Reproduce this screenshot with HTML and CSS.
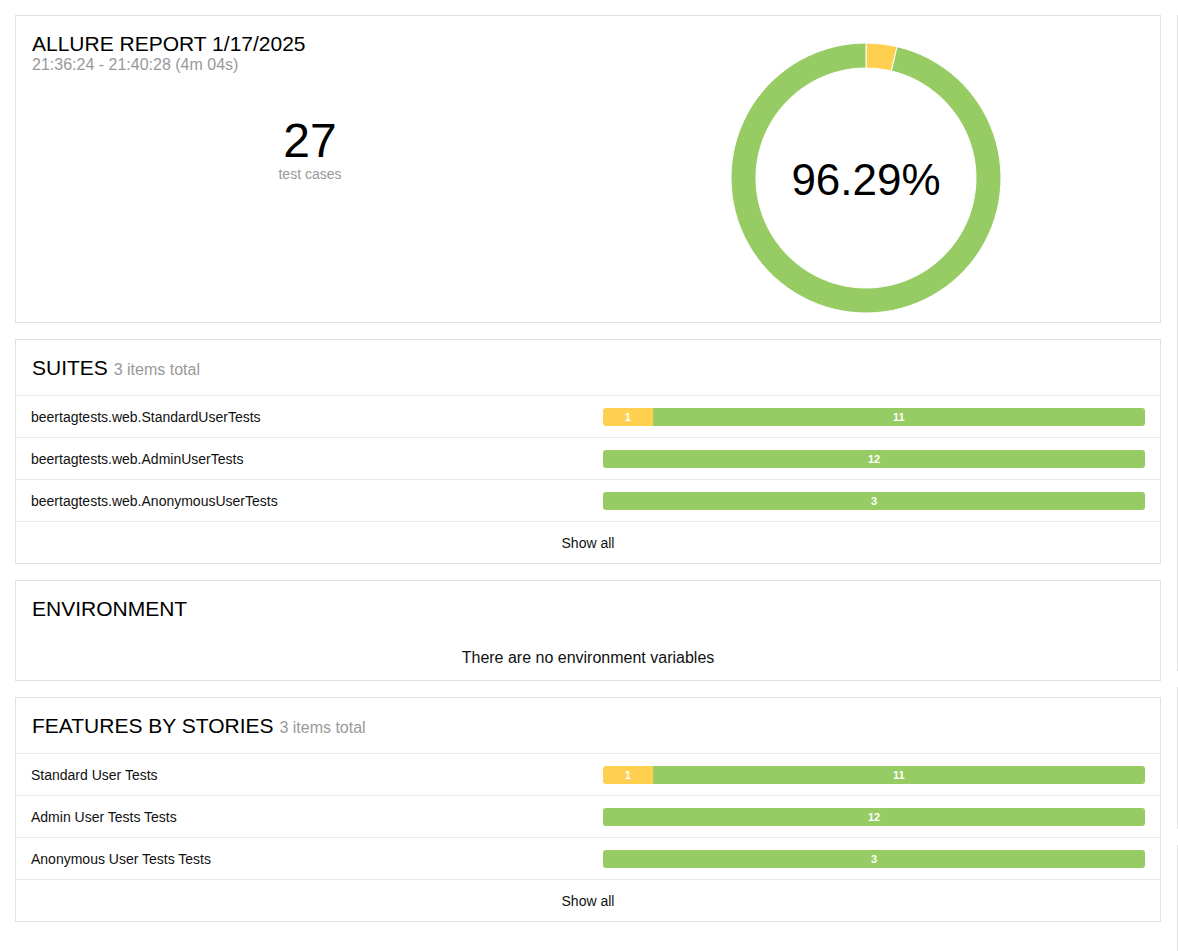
FILE: index.html
```html
<!DOCTYPE html>
<html lang="en">
<head>
<meta charset="utf-8">
<title>Allure Report</title>
<link rel="stylesheet" href="styles.css">
</head>
<body>
<div class="grid">
  <div class="col">
    <section class="card summary">
      <div class="summary-left">
        <h1 class="summary-title">ALLURE REPORT 1/17/2025</h1>
        <div class="summary-time">21:36:24 - 21:40:28 (4m 04s)</div>
        <div class="summary-count">
          <div class="count-num">27</div>
          <div class="count-label">test cases</div>
        </div>
      </div>
      <div class="summary-right">
        <div class="donut">
          <svg class="donut-svg" viewBox="-136 -136 272 272" width="272" height="272">
            <path class="arc-broken" d="M0,-135 A135,135 0 0 1 31.13,-131.36 L25.37,-107.03 A110,110 0 0 0 0,-110 Z"/>
            <path class="arc-passed" d="M31.13,-131.36 A135,135 0 1 1 0,-135 L0,-110 A110,110 0 1 0 25.37,-107.03 Z"/>
          </svg>
          <div class="donut-label">96.29%</div>
        </div>
      </div>
    </section>

    <section class="card">
      <div class="card-head bordered"><h2 class="card-title">SUITES <span class="card-sub">3 items total</span></h2></div>
      <div class="row">
        <div class="row-name">beertagtests.web.StandardUserTests</div>
        <div class="row-bar"><div class="bar"><div class="seg broken" style="width:9.2%">1</div><div class="seg passed">11</div></div></div>
      </div>
      <div class="row">
        <div class="row-name">beertagtests.web.AdminUserTests</div>
        <div class="row-bar"><div class="bar"><div class="seg passed">12</div></div></div>
      </div>
      <div class="row">
        <div class="row-name">beertagtests.web.AnonymousUserTests</div>
        <div class="row-bar"><div class="bar"><div class="seg passed">3</div></div></div>
      </div>
      <div class="row show-all">Show all</div>
    </section>

    <section class="card">
      <div class="card-head"><h2 class="card-title">ENVIRONMENT</h2></div>
      <div class="empty">There are no environment variables</div>
    </section>

    <section class="card">
      <div class="card-head bordered"><h2 class="card-title">FEATURES BY STORIES <span class="card-sub">3 items total</span></h2></div>
      <div class="row">
        <div class="row-name">Standard User Tests</div>
        <div class="row-bar"><div class="bar"><div class="seg broken" style="width:9.2%">1</div><div class="seg passed">11</div></div></div>
      </div>
      <div class="row">
        <div class="row-name">Admin User Tests Tests</div>
        <div class="row-bar"><div class="bar"><div class="seg passed">12</div></div></div>
      </div>
      <div class="row">
        <div class="row-name">Anonymous User Tests Tests</div>
        <div class="row-bar"><div class="bar"><div class="seg passed">3</div></div></div>
      </div>
      <div class="row show-all">Show all</div>
    </section>
  </div>

  <div class="col">
    <section class="card ghost ghost-1"></section>
    <section class="card ghost ghost-2"></section>
    <section class="card ghost ghost-3"></section>
  </div>
</div>
</body>
</html>
```

FILE: styles.css
```css
* { box-sizing: border-box; }

html, body {
  margin: 0;
  padding: 0;
  background: #fff;
  overflow: hidden;
}

body {
  font-family: "Liberation Sans", Arial, Helvetica, sans-serif;
  font-size: 14px;
  color: #222;
}

.grid {
  display: flex;
  align-items: flex-start;
  gap: 16px;
  padding: 15px;
  width: 100vw;
  height: 100vh;
  overflow: hidden;
}

.col {
  display: flex;
  flex-direction: column;
  gap: 16px;
  width: 1146px;
  flex: none;
}

.card {
  flex: none;
  background: #fff;
  border: 1px solid #e2e2e2;
}

/* summary */
.summary {
  display: grid;
  grid-template-columns: 556px 556px;
  padding: 16px 16px 8px;
}

.summary-title {
  margin: 0;
  font-size: 21px;
  line-height: 24px;
  font-weight: normal;
  color: #000;
}

.summary-time {
  font-size: 16px;
  line-height: 18px;
  color: #999;
}

.summary-count {
  margin-top: 43px;
  text-align: center;
}

.count-num {
  font-size: 48px;
  line-height: 48px;
  color: #000;
}

.count-label {
  font-size: 14px;
  line-height: 18px;
  color: #999;
}

.summary-right {
  display: flex;
  justify-content: center;
  padding-top: 10px;
}

.donut {
  position: relative;
  width: 272px;
  height: 272px;
}

.donut-svg { display: block; }

.arc-broken { fill: #ffd050; stroke: #fff; stroke-width: 1; }
.arc-passed { fill: #97cc64; stroke: #fff; stroke-width: 1; }

.donut-label {
  position: absolute;
  inset: 0;
  display: flex;
  align-items: center;
  justify-content: center;
  font-size: 44px;
  color: #000;
  padding-top: 4px;
}

/* card header */
.card-head {
  padding: 16px 16px 15px;
}

.card-head.bordered {
  border-bottom: 1px solid #eaeaea;
}

.card-title {
  margin: 0;
  height: 24px;
  font-size: 21px;
  line-height: 24px;
  font-weight: normal;
  color: #000;
  white-space: nowrap;
}

.card-sub {
  font-size: 16px;
  line-height: 1;
  color: #999;
}

/* rows */
.row {
  display: grid;
  grid-template-columns: 557px 557px;
  align-items: center;
  height: 42px;
  padding: 0 15px;
  border-bottom: 1px solid #eaeaea;
}

.row:last-child { border-bottom: none; height: 41px; }

.row-name {
  color: #111;
}

.row-bar {
  padding-left: 15px;
}

.bar {
  display: flex;
  height: 18px;
  border-radius: 3px;
  overflow: hidden;
}

.seg {
  display: flex;
  align-items: center;
  justify-content: center;
  color: #fff;
  font-size: 11px;
  font-weight: bold;
}

.seg.broken { background: #ffd050; flex: none; }
.seg.passed { background: #97cc64; flex: 1; }

.show-all {
  display: flex;
  justify-content: center;
  color: #111;
}

.empty {
  padding: 12px 16px 12px;
  font-size: 16px;
  line-height: 20px;
  text-align: center;
  color: #111;
}

.ghost-1 { height: 656px; }
.ghost-2 { height: 142px; }
.ghost-3 { height: 120px; }
```
